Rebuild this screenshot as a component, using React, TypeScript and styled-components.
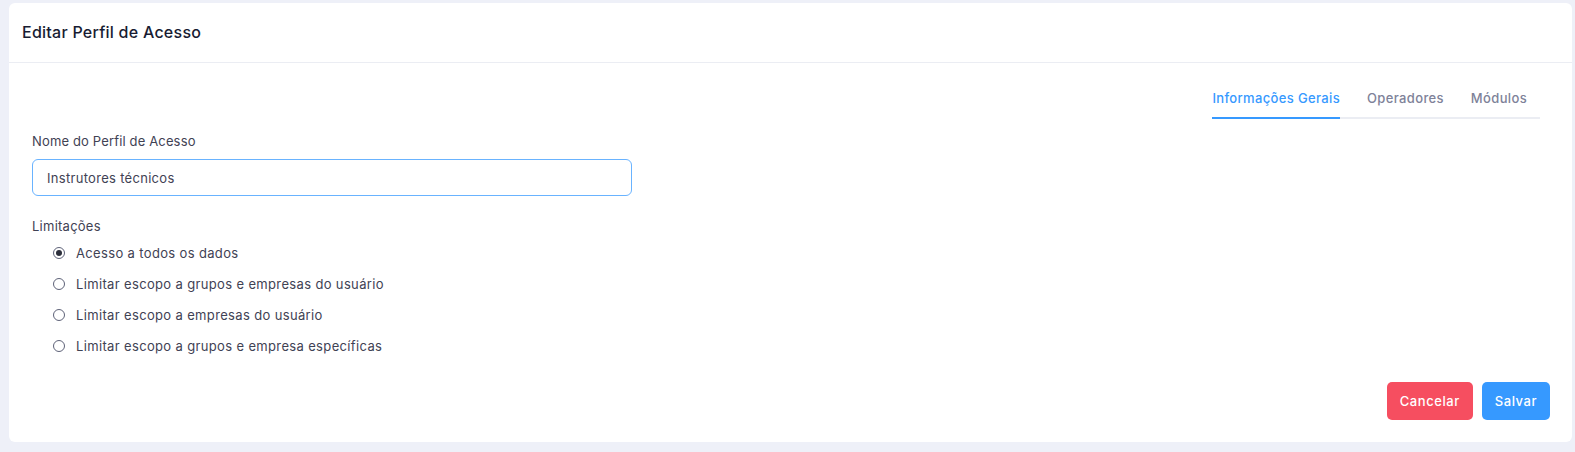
import React, { useState } from "react";
import styled, { createGlobalStyle } from "styled-components";

const GlobalStyle = createGlobalStyle`
  * { box-sizing: border-box; }
  html, body { margin: 0; padding: 0; background: #eef0f8; }
  body { font-family: Inter, "Noto Sans", sans-serif; color: #3f4254; }
`;

const Page = styled.div`
  padding: 3px 3px 10px 9px;
`;

const Card = styled.section`
  background: #ffffff;
  border-radius: 6px;
  display: flex;
  flex-direction: column;
`;

const CardHeader = styled.header`
  height: 60px;
  display: flex;
  align-items: center;
  padding-left: 13px;
  border-bottom: 1px solid #ebedf3;
`;

const Title = styled.h3`
  margin: 0 0 1px;
  font-size: 16px;
  font-weight: 500;
  color: #181c32;
  letter-spacing: 0.25px;
`;

const CardBody = styled.div`
  padding: 25px 22px 22px 23px;
  display: flex;
  flex-direction: column;
`;

const TabsRow = styled.div`
  display: flex;
  justify-content: flex-end;
  padding-right: 10px;
`;

const TabList = styled.nav`
  display: flex;
  gap: 27px;
  padding-right: 13px;
  border-bottom: 2px solid #ebedf3;
`;

const Tab = styled.button<{ $active?: boolean }>`
  appearance: none;
  background: none;
  border: none;
  padding: 0 0 9px;
  margin-bottom: -2px;
  border-bottom: 2px solid ${(p) => (p.$active ? "#3699ff" : "transparent")};
  font-family: inherit;
  font-size: 13px;
  line-height: 20px;
  font-weight: 500;
  letter-spacing: 0.35px;
  color: ${(p) => (p.$active ? "#3699ff" : "#7e8299")};
  cursor: pointer;
`;

const Field = styled.div`
  display: flex;
  flex-direction: column;
  margin-top: 13px;
`;

const Label = styled.label`
  font-size: 13px;
  line-height: 18px;
  letter-spacing: 0.15px;
  color: #3f4254;
  margin-bottom: 9px;
`;

const Input = styled.input`
  width: 600px;
  height: 37px;
  border: 1px solid #69b3ff;
  border-radius: 6px;
  padding: 0 14px;
  font-family: inherit;
  font-size: 13px;
  letter-spacing: 0.3px;
  color: #3f4254;
  outline: none;
`;

const Group = styled.div`
  display: flex;
  flex-direction: column;
  margin-top: 21px;
`;

const GroupLabel = styled.div`
  font-size: 13px;
  line-height: 18px;
  letter-spacing: 0.25px;
  color: #3f4254;
`;

const RadioList = styled.div`
  display: flex;
  flex-direction: column;
  padding-top: 2px;
`;

const RadioRow = styled.label`
  height: 31px;
  display: flex;
  align-items: center;
  padding-left: 21px;
  gap: 11px;
  font-size: 13px;
  letter-spacing: 0.35px;
  color: #3f4254;
  cursor: pointer;
`;

const RadioMark = styled.span<{ $checked?: boolean }>`
  width: 12px;
  height: 12px;
  border-radius: 50%;
  border: 1px solid #5e6278;
  display: inline-flex;
  align-items: center;
  justify-content: center;
  flex: none;
  &::after {
    content: "";
    width: 6px;
    height: 6px;
    border-radius: 50%;
    background: ${(p) => (p.$checked ? "#2b2e3b" : "transparent")};
  }
`;

const Actions = styled.div`
  display: flex;
  justify-content: flex-end;
  gap: 9px;
  margin-top: 21px;
`;

const Button = styled.button<{ $variant: "danger" | "primary" }>`
  appearance: none;
  border: none;
  height: 38px;
  padding: 0 13px;
  border-radius: 5px;
  font-family: inherit;
  font-size: 13px;
  font-weight: 500;
  letter-spacing: 0.55px;
  color: #ffffff;
  background: ${(p) => (p.$variant === "danger" ? "#f64e60" : "#3699ff")};
  cursor: pointer;
`;

const options = [
  "Acesso a todos os dados",
  "Limitar escopo a grupos e empresas do usuário",
  "Limitar escopo a empresas do usuário",
  "Limitar escopo a grupos e empresa específicas",
];

export default function App() {
  const [selected, setSelected] = useState(0);
  const [tab, setTab] = useState(0);
  const [name, setName] = useState("Instrutores técnicos");
  const tabs = ["Informações Gerais", "Operadores", "Módulos"];
  return (
    <>
      <GlobalStyle />
      <Page>
        <Card>
          <CardHeader>
            <Title>Editar Perfil de Acesso</Title>
          </CardHeader>
          <CardBody>
            <TabsRow>
              <TabList>
                {tabs.map((t, i) => (
                  <Tab key={t} $active={tab === i} onClick={() => setTab(i)}>
                    {t}
                  </Tab>
                ))}
              </TabList>
            </TabsRow>
            <Field>
              <Label htmlFor="nome">Nome do Perfil de Acesso</Label>
              <Input id="nome" value={name} onChange={(e) => setName(e.target.value)} />
            </Field>
            <Group>
              <GroupLabel>Limitações</GroupLabel>
              <RadioList>
                {options.map((o, i) => (
                  <RadioRow key={o} onClick={() => setSelected(i)}>
                    <RadioMark $checked={selected === i} />
                    {o}
                  </RadioRow>
                ))}
              </RadioList>
            </Group>
            <Actions>
              <Button $variant="danger">Cancelar</Button>
              <Button $variant="primary">Salvar</Button>
            </Actions>
          </CardBody>
        </Card>
      </Page>
    </>
  );
}
